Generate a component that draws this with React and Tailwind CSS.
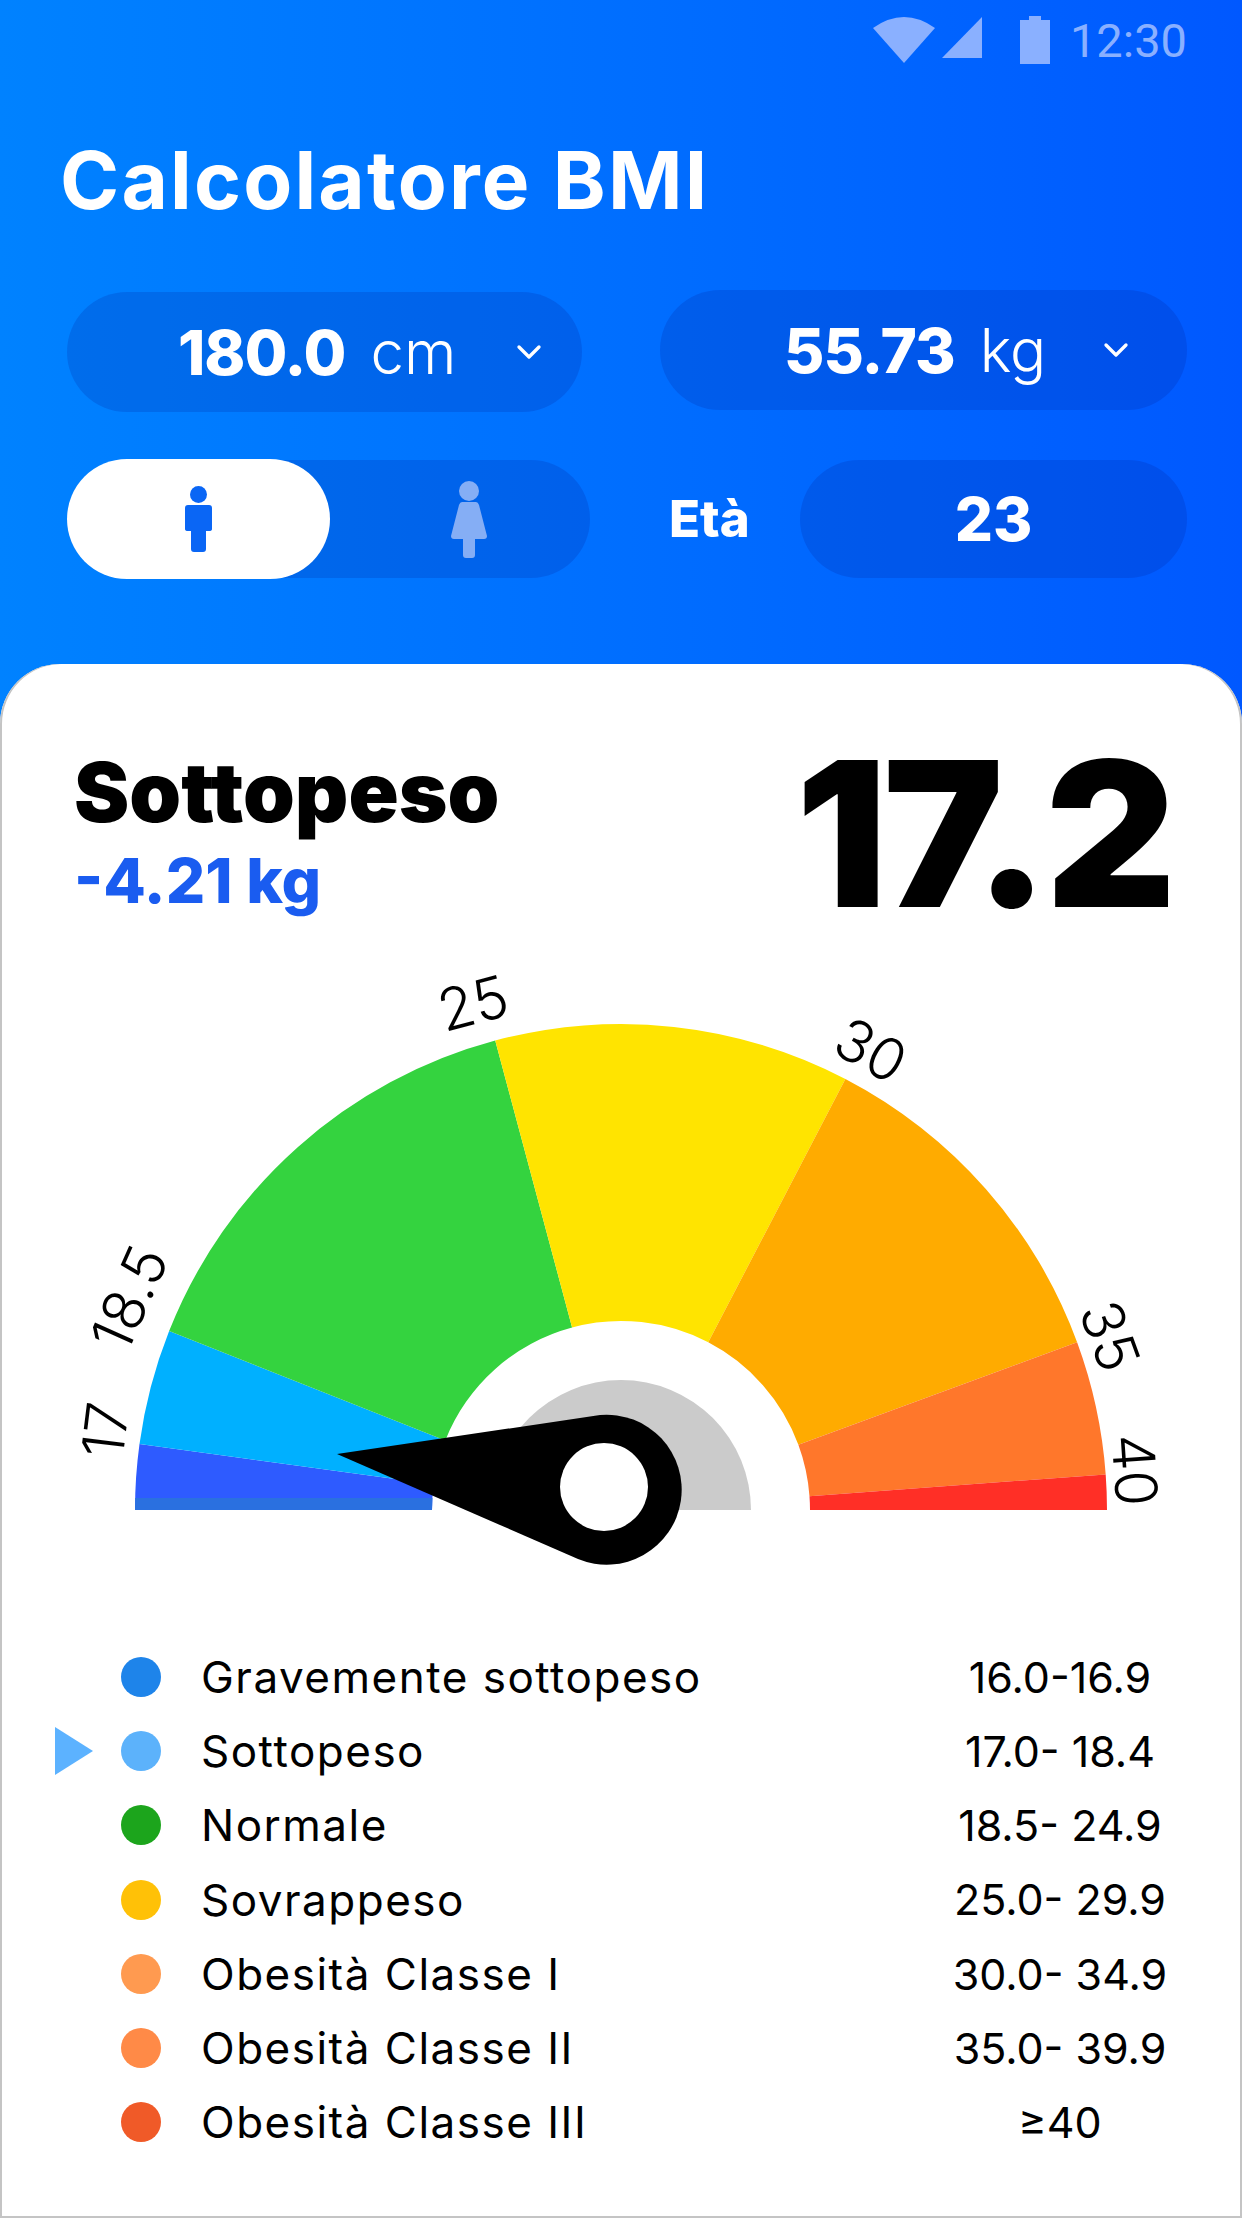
import { ChevronDown } from "lucide-react";

const CX = 621;
const CY = 1510;
const R = 486;
const r = 189;

const point = (radius, deg) => {
  const a = (deg * Math.PI) / 180;
  return [CX - radius * Math.cos(a), CY - radius * Math.sin(a)];
};

const sector = (from, to) => {
  const [ax, ay] = point(R, from);
  const [bx, by] = point(R, to);
  const [cx, cy] = point(r, to);
  const [dx, dy] = point(r, from);
  return `M${ax} ${ay}A${R} ${R} 0 0 1 ${bx} ${by}L${cx} ${cy}A${r} ${r} 0 0 0 ${dx} ${dy}Z`;
};

const segments = [
  { from: 0, to: 7.8, color: "#2e5bff" },
  { from: 7.8, to: 21.6, color: "#00b0ff" },
  { from: 21.6, to: 75, color: "#34d33f" },
  { from: 75, to: 117.5, color: "#ffe400" },
  { from: 117.5, to: 159.8, color: "#ffab00" },
  { from: 159.8, to: 175.8, color: "#ff772b" },
  { from: 175.8, to: 180, color: "#ff2f26" },
];

const ticks = [
  { label: "17", x: 105, y: 1430, rot: -83 },
  { label: "18.5", x: 129, y: 1298, rot: -66 },
  { label: "25", x: 473, y: 1003, rot: -15 },
  { label: "30", x: 871, y: 1050, rot: 29 },
  { label: "35", x: 1110, y: 1336, rot: 70 },
  { label: "40", x: 1135, y: 1470, rot: 86 },
];

const legend = [
  { name: "Gravemente sottopeso", range: "16.0-16.9", color: "bg-[#1e84ea]" },
  { name: "Sottopeso", range: "17.0- 18.4", color: "bg-[#5cb2fb]", active: true },
  { name: "Normale", range: "18.5- 24.9", color: "bg-[#1ca51c]" },
  { name: "Sovrappeso", range: "25.0- 29.9", color: "bg-[#ffc107]" },
  { name: "Obesità Classe I", range: "30.0- 34.9", color: "bg-[#ff9a50]" },
  { name: "Obesità Classe II", range: "35.0- 39.9", color: "bg-[#ff8a47]" },
  { name: "Obesità Classe III", range: "≥40", color: "bg-[#f05a28]" },
];

function StatusBar() {
  return (
    <div className="flex h-[80px] items-start justify-end pr-[55px] pt-[16px]">
      <svg width="62" height="48" viewBox="0 0 62 48" className="mr-[6px]">
        <path d="M31 47L0 12Q31 -10 62 12Z" fill="#8ab0ff" />
      </svg>
      <svg width="42" height="42" viewBox="0 0 42 42" className="mr-[37px]">
        <path d="M1 42L41 1V42Z" fill="#8ab0ff" />
      </svg>
      <svg width="30" height="48" viewBox="0 0 30 48" className="mr-[20px]">
        <path d="M0 4H9V0H21V4H30V48H0Z" fill="#8ab0ff" />
      </svg>
      <span className="[font-family:Roboto,sans-serif] text-[47px] leading-[50px] text-[#8ab0ff]">12:30</span>
    </div>
  );
}

function ValuePill({ value, unit, className }) {
  return (
    <div className={`flex h-[120px] items-center rounded-full bg-[#00249c]/20 ${className}`}>
      <span className="text-[62px] font-extrabold tracking-[-1px] text-white">{value}</span>
      <span className="ml-[25px] text-[60px] font-light text-white">{unit}</span>
      <ChevronDown className="ml-auto text-white" size={40} strokeWidth={2} />
    </div>
  );
}

function Gauge() {
  return (
    <svg width="1242" height="680" viewBox="0 960 1242 680" className="block">
      {segments.map((s) => (
        <path key={s.from} d={sector(s.from, s.to)} fill={s.color} />
      ))}
      <path d="M135 1510L135.2 1498H432.4L432 1510Z" fill="#2a70e0" />
      <path d="M491 1510A130 130 0 0 1 751 1510Z" fill="#cbcbcb" />
      {ticks.map((t) => (
        <text
          key={t.label}
          x={t.x}
          y={t.y}
          transform={`rotate(${t.rot} ${t.x} ${t.y})`}
          textAnchor="middle"
          dominantBaseline="central"
          fontSize="58"
          fontWeight="300"
          fill="#000"
        >
          {t.label}
        </text>
      ))}
      <path d="M337 1454L600 1415A75 75 0 1 1 578 1559Z" fill="#000" />
      <circle cx="604" cy="1487" r="44" fill="#fff" />
    </svg>
  );
}

export default function App() {
  return (
    <div className="flex h-[2218px] w-[1242px] flex-col overflow-hidden bg-gradient-to-r from-[#0082ff] to-[#0058ff] [font-family:Inter,sans-serif]">
      <div className="h-[584px] shrink-0">
        <StatusBar />

        <h1 className="ml-[60px] mt-[54px] text-[80px] font-bold leading-[92px] tracking-[2.2px] text-white">Calcolatore BMI</h1>

        <div className="mt-[64px] flex items-start pl-[67px] pr-[55px]">
          <ValuePill value="180.0" unit="cm" className="mt-[2px] w-[515px] pl-[111px] pr-[33px]" />
          <ValuePill value="55.73" unit="kg" className="ml-auto w-[527px] pl-[124px] pr-[51px]" />
        </div>

        <div className="mt-[48px] flex items-center pl-[67px] pr-[55px]">
          <div className="flex h-[118px] w-[523px] items-center rounded-full bg-[#00249c]/20">
            <div className="flex h-[120px] w-[263px] items-center justify-center rounded-full bg-white">
              <svg width="27" height="66" viewBox="0 0 27 66">
                <circle cx="13.5" cy="8.5" r="8.5" fill="#0a66f5" />
                <path d="M3 19H24Q27 19 27 22V43Q27 45 24 45H21V63Q21 66 18 66H9Q6 66 6 63V45H3Q0 45 0 43V22Q0 19 3 19Z" fill="#0a66f5" />
              </svg>
            </div>
            <div className="flex flex-1 justify-center pl-[18px]">
              <svg width="36" height="77" viewBox="0 0 36 77">
                <circle cx="18" cy="10" r="10" fill="#85aef5" />
                <path d="M11 21H25Q27 21 28 24L36 55Q36 58 33 58H24V74Q24 77 21 77H15Q12 77 12 74V58H3Q0 58 0 55L8 24Q9 21 11 21Z" fill="#85aef5" />
              </svg>
            </div>
          </div>
          <span className="ml-[79px] text-[51px] font-extrabold text-white">Età</span>
          <div className="ml-auto flex h-[118px] w-[387px] items-center justify-center rounded-full bg-[#00249c]/20 text-[60px] font-extrabold text-white">
            23
          </div>
        </div>
      </div>

      <div className="mt-[80px] flex-1 rounded-t-[60px] bg-white shadow-[inset_2px_0_#c4c4c4,inset_-2px_0_#c4c4c4,inset_0_-2px_#c4c4c4]">
        <div className="flex h-[296px] items-start justify-between pl-[74px] pr-[70px]">
          <div className="pt-[84px]">
            <div className="text-[83px] font-black leading-[88px] text-black">Sottopeso</div>
            <div className="mt-[12px] text-[62px] font-extrabold leading-[66px] text-[#1a5cf0]">-4.21 kg</div>
          </div>
          <div className="pt-[50px] text-[202px] font-black leading-[240px] tracking-[-4px] text-black">17.2</div>
        </div>

        <Gauge />

        <div className="flex flex-col">
          {legend.map((row) => (
            <div key={row.name} className="flex h-[74.2px] items-center pl-[55px] text-black">
              <div className="w-[66px]">
                {row.active && (
                  <svg width="38" height="48" viewBox="0 0 38 48" className="block">
                    <path d="M0 0L38 24L0 48Z" fill="#5cb2ff" />
                  </svg>
                )}
              </div>
              <span className={`h-[40px] w-[40px] rounded-full ${row.color}`} />
              <span className="ml-[40px] text-[44px] tracking-[1.5px]">{row.name}</span>
              <span className="ml-auto mr-[32px] w-[300px] text-center text-[43px]">{row.range}</span>
            </div>
          ))}
        </div>
      </div>
    </div>
  );
}
